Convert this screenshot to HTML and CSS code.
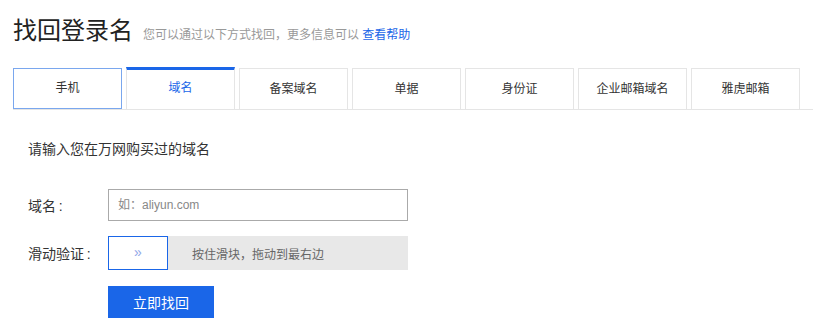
FILE: index.html
```html
<!DOCTYPE html>
<html>
<head>
  <title>找回登录名</title>
  <link rel="stylesheet" href="styles.css">
</head>
<body>
  <div class="page">
    <div class="header">
      <h1>找回登录名</h1>
      <span class="tip">您可以通过以下方式找回，更多信息可以 <a href="#">查看帮助</a></span>
    </div>

    <div class="tabs">
      <div class="tab focus">手机</div>
      <div class="tab active">域名</div>
      <div class="tab">备案域名</div>
      <div class="tab">单据</div>
      <div class="tab">身份证</div>
      <div class="tab">企业邮箱域名</div>
      <div class="tab">雅虎邮箱</div>
    </div>

    <div class="form">
      <p class="intro">请输入您在万网购买过的域名</p>
      <div class="row">
        <label>域名&thinsp;:</label>
        <input type="text" class="field" placeholder="如：aliyun.com">
      </div>
      <div class="row">
        <label>滑动验证&thinsp;:</label>
        <div class="slider">
          <div class="knob">&raquo;</div>
          <span class="slider-text">按住滑块，拖动到最右边</span>
        </div>
      </div>
      <div class="row submit">
        <label></label>
        <button>立即找回</button>
      </div>
    </div>
  </div>
</body>
</html>
```

FILE: styles.css
```css
body {
  margin: 0;
  background: #fff;
  font-family: "Liberation Sans", "Noto Sans CJK SC", sans-serif;
  color: #333;
}
.page {
  padding: 0 0 0 13px;
}
.header {
  display: flex;
  align-items: baseline;
  height: 56px;
  padding-top: 11px;
  box-sizing: border-box;
}
h1 {
  margin: 0;
  font-size: 24px;
  font-weight: normal;
  color: #222;
}
.tip {
  margin-left: 10px;
  font-size: 12px;
  color: #999;
}
.tip a {
  color: #1a66e8;
  text-decoration: none;
}
.tabs {
  display: flex;
  gap: 4px;
  margin-top: 12px;
  border-bottom: 1px solid #e5e5e5;
}
.tab {
  width: 107px;
  height: 40px;
  line-height: 40px;
  text-align: center;
  font-size: 12px;
  border: 1px solid #e5e5e5;
  border-bottom: none;
  color: #333;
}
.tab.focus {
  border: 1px solid #7aa7ee;
  height: 39px;
  line-height: 39px;
  margin-bottom: -1px;
  position: relative;
  z-index: 1;
}
.tab.active {
  border-top: 3px solid #1a66e8;
  margin-top: -1px;
  height: 39px;
  line-height: 37px;
  color: #1a66e8;
  background: #fff;
  margin-bottom: -1px;
}
.form {
  padding: 31px 0 0 15px;
}
.intro {
  margin: 0 0 32px;
  font-size: 14px;
  line-height: 16px;
  color: #333;
}
.row {
  display: flex;
  align-items: center;
  margin-bottom: 15px;
  font-size: 14px;
}
.row label {
  width: 80px;
  color: #333;
}
.submit {
  margin-top: 16px;
}
.field {
  width: 300px;
  height: 32px;
  box-sizing: border-box;
  border: 1px solid #aaa;
  padding: 0 9px;
  font-size: 12px;
  font-family: inherit;
  outline: none;
}
.field::placeholder {
  color: #888;
}
.slider {
  width: 300px;
  height: 34px;
  background: #e8e8e8;
  display: flex;
  align-items: center;
}
.knob {
  width: 60px;
  height: 34px;
  box-sizing: border-box;
  border: 1px solid #1a66e8;
  background: #fff;
  color: #8fa6e8;
  text-align: center;
  line-height: 30px;
  font-size: 14px;
}
.slider-text {
  margin-left: 24px;
  color: #666;
  font-size: 12px;
}
button {
  width: 106px;
  height: 32px;
  background: #1a66e8;
  color: #fff;
  border: none;
  font-size: 14px;
  font-family: inherit;
  cursor: pointer;
}
```
